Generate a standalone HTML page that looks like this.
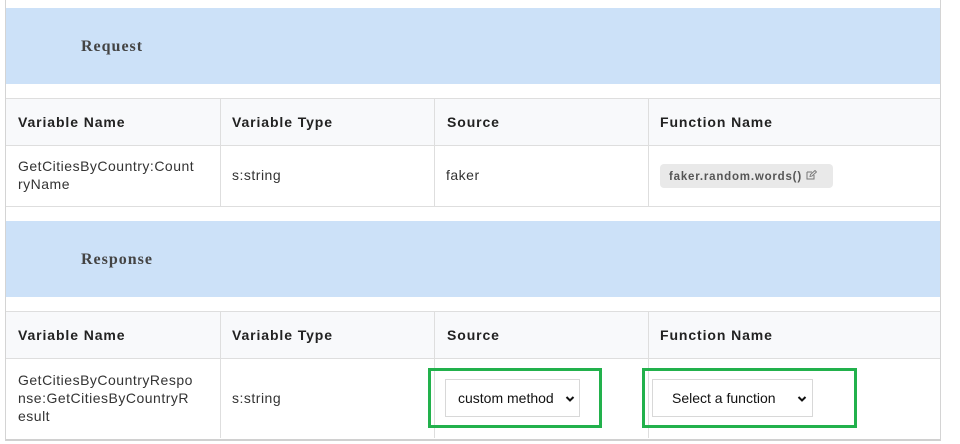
<!DOCTYPE html>
<html><head><meta charset="utf-8"><style>
*{margin:0;padding:0;box-sizing:border-box}
body{width:960px;height:444px;background:#fff;position:relative;overflow:hidden;font-family:"Liberation Sans",Arial,sans-serif;color:#222}
.abs{position:absolute}
.frame{left:5px;top:0;width:936px;height:441px;border-left:1px solid #d4d4d4;border-right:1px solid #d4d4d4;border-bottom:2px solid #d0d0d0}
.band{left:6px;width:934px;height:76px;background:#cce1f8}
.band span{position:absolute;left:75px;top:30px;font-family:"Liberation Serif",serif;font-weight:bold;font-size:16px;letter-spacing:1px;color:#444}
.hline{left:6px;width:934px;height:1px;background:#dedede}
.vline{width:1px;background:#dedede}
.hdr{left:6px;width:934px;height:46px;background:#f8f9fb}
.th{font-weight:bold;font-size:14px;letter-spacing:0.9px;color:#222}
.td{font-size:14px;letter-spacing:0.5px;color:#333;line-height:18px}
.badge{left:660px;top:164px;width:173px;height:24px;background:#e9e9e9;border-radius:4px;font-weight:bold;font-size:11.5px;letter-spacing:0.8px;color:#555;padding:6px 0 0 9px}
.green{border:3px solid #22b14c}
.sel{border:1px solid #d8d8d8;background:#fff;font-size:14px;color:#111}
</style></head><body>
<div class="abs frame"></div>
<div class="abs band" style="top:8px"><span style="top:30px">Request</span></div>
<div class="abs hline" style="top:98px"></div>
<div class="abs hdr" style="top:99px"></div>
<div class="abs hline" style="top:145px"></div>
<div class="abs hline" style="top:206px"></div>
<div class="abs vline" style="left:220px;top:99px;height:107px"></div>
<div class="abs vline" style="left:434px;top:99px;height:107px"></div>
<div class="abs vline" style="left:648px;top:99px;height:107px"></div>
<div class="abs th" style="left:18px;top:114px">Variable Name</div>
<div class="abs th" style="left:232px;top:114px">Variable Type</div>
<div class="abs th" style="left:447px;top:114px">Source</div>
<div class="abs th" style="left:660px;top:114px">Function Name</div>
<div class="abs td" style="left:18px;top:157px;width:200px">GetCitiesByCountry:Count<br>ryName</div>
<div class="abs td" style="left:232px;top:166px">s:string</div>
<div class="abs td" style="left:446px;top:166px">faker</div>
<div class="abs badge">faker.random.words() <svg width="11" height="10" viewBox="0 0 11 10" style="vertical-align:0px"><path d="M1 2h5M1 2v7h7V5" fill="none" stroke="#777" stroke-width="1"/><path d="M4 6.5l0.5-2L9 0.5l1.5 1.5L6 6z" fill="none" stroke="#777" stroke-width="0.9"/></svg></div>

<div class="abs band" style="top:221px"><span style="top:30px">Response</span></div>
<div class="abs hline" style="top:311px"></div>
<div class="abs hdr" style="top:312px"></div>
<div class="abs hline" style="top:358px"></div>
<div class="abs vline" style="left:220px;top:312px;height:126px"></div>
<div class="abs vline" style="left:434px;top:312px;height:126px"></div>
<div class="abs vline" style="left:648px;top:312px;height:126px"></div>
<div class="abs th" style="left:18px;top:327px">Variable Name</div>
<div class="abs th" style="left:232px;top:327px">Variable Type</div>
<div class="abs th" style="left:447px;top:327px">Source</div>
<div class="abs th" style="left:660px;top:327px">Function Name</div>
<div class="abs td" style="left:18px;top:371px;width:200px">GetCitiesByCountryRespo<br>nse:GetCitiesByCountryR<br>esult</div>
<div class="abs td" style="left:232px;top:389px">s:string</div>

<div class="abs green" style="left:428px;top:368px;width:174px;height:60px"></div>
<div class="abs green" style="left:642px;top:368px;width:215px;height:60px"></div>
<div class="abs sel" style="left:445px;top:379px;width:135px;height:38px">
<span class="abs" style="left:12px;top:10px">custom method</span>
<svg class="abs" style="left:119px;top:15px" width="10" height="8" viewBox="0 0 10 8"><path d="M1.5 2l3.5 3.5L8.5 2" fill="none" stroke="#111" stroke-width="2"/></svg></div>
<div class="abs sel" style="left:652px;top:379px;height:38px;width:161px">
<span class="abs" style="left:19px;top:10px">Select a function</span>
<svg class="abs" style="left:144px;top:15px" width="10" height="8" viewBox="0 0 10 8"><path d="M1.5 2l3.5 3.5L8.5 2" fill="none" stroke="#111" stroke-width="2"/></svg></div>
</body></html>
